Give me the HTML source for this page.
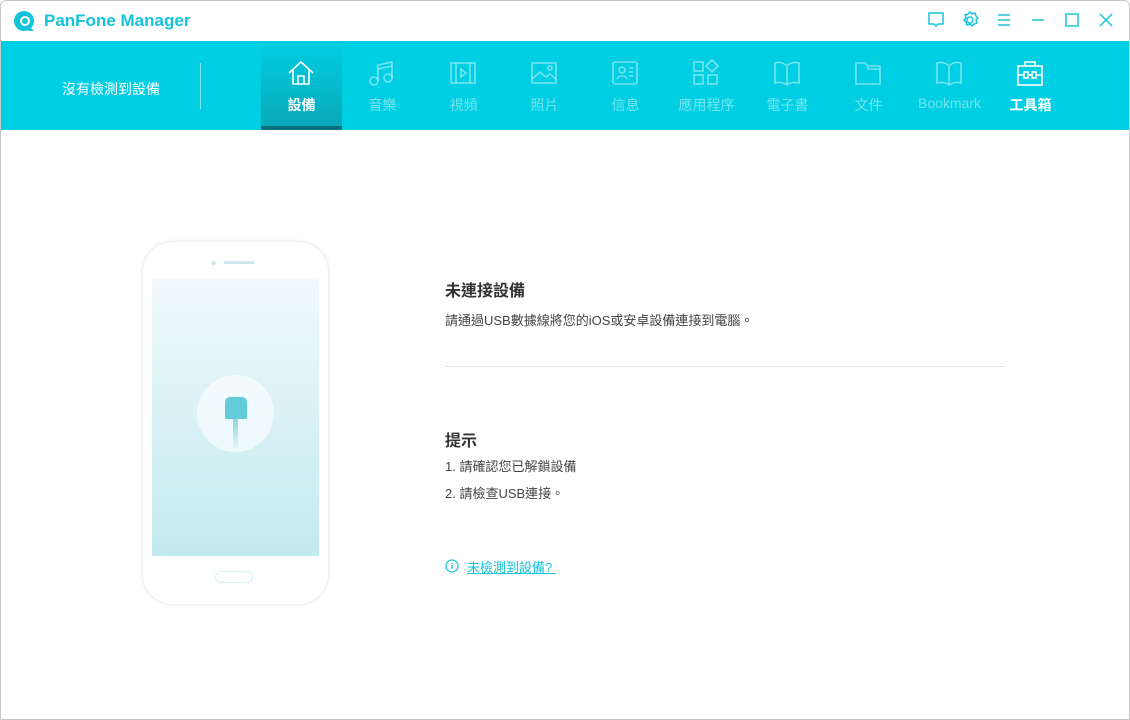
<!DOCTYPE html>
<html><head><meta charset="utf-8"><style>
*{margin:0;padding:0;box-sizing:border-box}
body{width:1130px;height:720px;overflow:hidden;background:#fff;font-family:"Liberation Sans","Noto Sans CJK TC",sans-serif;position:relative}
.win{position:absolute;left:0;top:0;width:1130px;height:720px;border:1px solid #c8c8c8;border-radius:6px 6px 0 0}
.title{position:absolute;left:44px;top:11px;font-size:17px;font-weight:bold;color:#14c3d9}
.bar{position:absolute;left:1px;top:41px;width:1128px;height:89px;background:#00cee2}
.nodev{position:absolute;left:0;width:220px;top:38px;text-align:center;color:#fff;font-size:14px}
.sep{position:absolute;left:199px;top:22px;width:1px;height:46px;background:rgba(255,255,255,.5)}
.tab{position:absolute;top:0;width:81px;height:89px;text-align:center;color:rgba(255,255,255,.45);font-size:14px}
.tab svg{position:absolute;left:26px;top:18px;width:28px;height:28px;fill:none;stroke:rgba(255,255,255,.45);stroke-width:1.6}
.tab span{position:absolute;left:0;right:0;top:54px}
.tab.on{background:linear-gradient(#00cee2,#0aa8b8);color:#fff;font-weight:bold}
.tab.on:after{content:"";position:absolute;left:0;right:0;bottom:0;height:4px;background:#06707c}
.tab.w{color:#fff;font-weight:bold}
.tab.on svg,.tab.w svg{stroke:#fff}
.ctl{position:absolute;top:10px;width:20px;height:20px;stroke:#17c4da;fill:none;stroke-width:1.5}
h2{position:absolute;left:445px;font-size:16px;color:#333;font-weight:bold}
.t{position:absolute;left:445px;font-size:13px;color:#444}
</style></head><body>
<div class="win"></div>
<svg style="position:absolute;left:12px;top:9px" width="24" height="24" viewBox="0 0 24 24"><circle cx="12" cy="12" r="10" fill="#14c3d9"/><circle cx="13" cy="12" r="5" fill="#fff"/><circle cx="13" cy="12" r="3" fill="#14c3d9"/><path d="M18 18l4 4-6 0z" fill="#14c3d9"/></svg>
<div class="title">PanFone Manager</div>
<svg class="ctl" style="left:926px" viewBox="0 0 20 20"><path d="M3 3h14v11h-5l-2 2-2-2H3z"/></svg>
<svg class="ctl" style="left:960px" viewBox="0 0 20 20"><circle cx="10" cy="10" r="3"/><path d="M10 2l2 2 3-1 1 3 2 2-2 2 1 3-3 1-2 2-2-2-3 1-1-3-2-2 2-2-1-3 3-1z"/></svg>
<svg class="ctl" style="left:994px" viewBox="0 0 20 20"><path d="M4 5h12M4 10h12M4 15h12"/></svg>
<svg class="ctl" style="left:1028px" viewBox="0 0 20 20"><path d="M4 10h12"/></svg>
<svg class="ctl" style="left:1062px" viewBox="0 0 20 20"><rect x="4" y="4" width="12" height="12"/></svg>
<svg class="ctl" style="left:1096px" viewBox="0 0 20 20"><path d="M4 4l12 12M16 4L4 16"/></svg>
<div class="bar">
<div class="nodev">沒有檢測到設備</div><div class="sep"></div>
<div class="tab on" style="left:260px"><svg viewBox="0 0 28 28"><path d="M2 14L14 3l12 11M6 11v14h16V11M11 25v-8h6v8"/></svg><span>設備</span></div>
<div class="tab" style="left:341px"><svg viewBox="0 0 28 28"><path d="M10 22V6l14-3v16"/><circle cx="6" cy="22" r="4"/><circle cx="20" cy="19" r="4"/><path d="M10 10l14-3"/></svg><span>音樂</span></div>
<div class="tab" style="left:422px"><svg viewBox="0 0 28 28"><rect x="2" y="4" width="24" height="20"/><path d="M7 4v20M21 4v20M12 10l5 4-5 4z"/></svg><span>視頻</span></div>
<div class="tab" style="left:503px"><svg viewBox="0 0 28 28"><rect x="2" y="4" width="24" height="20"/><path d="M2 20l8-7 6 5 4-3 6 5"/><circle cx="20" cy="9" r="2"/></svg><span>照片</span></div>
<div class="tab" style="left:584px"><svg viewBox="0 0 28 28"><rect x="2" y="3" width="24" height="22" rx="2"/><circle cx="11" cy="11" r="3"/><path d="M6 20c1-4 9-4 10 0M18 9h4M18 13h4M18 17h4"/></svg><span>信息</span></div>
<div class="tab" style="left:665px"><svg viewBox="0 0 28 28"><rect x="2" y="3" width="9" height="9"/><rect x="2" y="16" width="9" height="9"/><rect x="16" y="16" width="9" height="9"/><path d="M20 1l6 6-6 6-6-6z"/></svg><span>應用程序</span></div>
<div class="tab" style="left:746px"><svg viewBox="0 0 28 28"><path d="M14 7C10 3 5 3 2 4v20c3-1 8-1 12 2 4-3 9-3 12-2V4c-3-1-8-1-12 3zM14 7v19"/></svg><span>電子書</span></div>
<div class="tab" style="left:827px"><svg viewBox="0 0 28 28"><path d="M2 4h9l3 3h12v18H2zM14 7v3h12"/></svg><span>文件</span></div>
<div class="tab" style="left:908px"><svg viewBox="0 0 28 28"><path d="M14 7C10 3 5 3 2 4v20c3-1 8-1 12 2 4-3 9-3 12-2V4c-3-1-8-1-12 3zM14 7v19"/></svg><span>Bookmark</span></div>
<div class="tab w" style="left:989px"><svg viewBox="0 0 28 28"><rect x="2" y="7" width="24" height="19"/><path d="M9 7V3h10v4M2 16h6M20 16h6"/><rect x="8" y="13" width="4" height="6"/><rect x="16" y="13" width="4" height="6"/><path d="M12 16h4"/></svg><span>工具箱</span></div>
</div>
<div style="position:absolute;left:143px;top:242px;width:185px;height:362px;border-radius:30px;background:#fff;box-shadow:0 0 4px rgba(0,0,0,.15)"></div>
<div style="position:absolute;left:211px;top:261px;width:5px;height:4px;border-radius:50%;background:#cfe8ee"></div>
<div style="position:absolute;left:224px;top:261px;width:30px;height:3px;background:#cfe8ee"></div>
<div style="position:absolute;left:152px;top:279px;width:167px;height:277px;background:linear-gradient(#f0f9fd,#c2eaef)"></div>
<div style="position:absolute;left:197px;top:375px;width:77px;height:77px;border-radius:50%;background:rgba(255,255,255,.6)"></div>
<div style="position:absolute;left:225px;top:397px;width:22px;height:22px;border-radius:5px 5px 1px 1px;background:#62ccdb"></div>
<div style="position:absolute;left:233px;top:419px;width:5px;height:32px;background:linear-gradient(#8ad8e3,rgba(255,255,255,0))"></div>
<div style="position:absolute;left:215px;top:571px;width:38px;height:12px;border:1.5px solid #d8f1f5;border-radius:6px"></div>
<h2 style="top:277px">未連接設備</h2>
<div class="t" style="top:310px">請通過USB數據線將您的iOS或安卓設備連接到電腦。</div>
<div style="position:absolute;left:445px;top:366px;width:560px;height:1px;background:#e4e4e4"></div>
<h2 style="top:427px">提示</h2>
<div class="t" style="top:456px">1. 請確認您已解鎖設備</div>
<div class="t" style="top:483px">2. 請檢查USB連接。</div>
<svg style="position:absolute;left:445px;top:559px" width="14" height="14" viewBox="0 0 14 14"><circle cx="7" cy="7" r="6" fill="none" stroke="#14c3d9" stroke-width="1.2"/><path d="M7 6v4M7 4v1" stroke="#14c3d9" stroke-width="1.4"/></svg>
<div class="t" style="left:467px;top:557px;color:#14c3d9;text-decoration:underline">未檢測到設備?&nbsp;</div>
</body></html>
